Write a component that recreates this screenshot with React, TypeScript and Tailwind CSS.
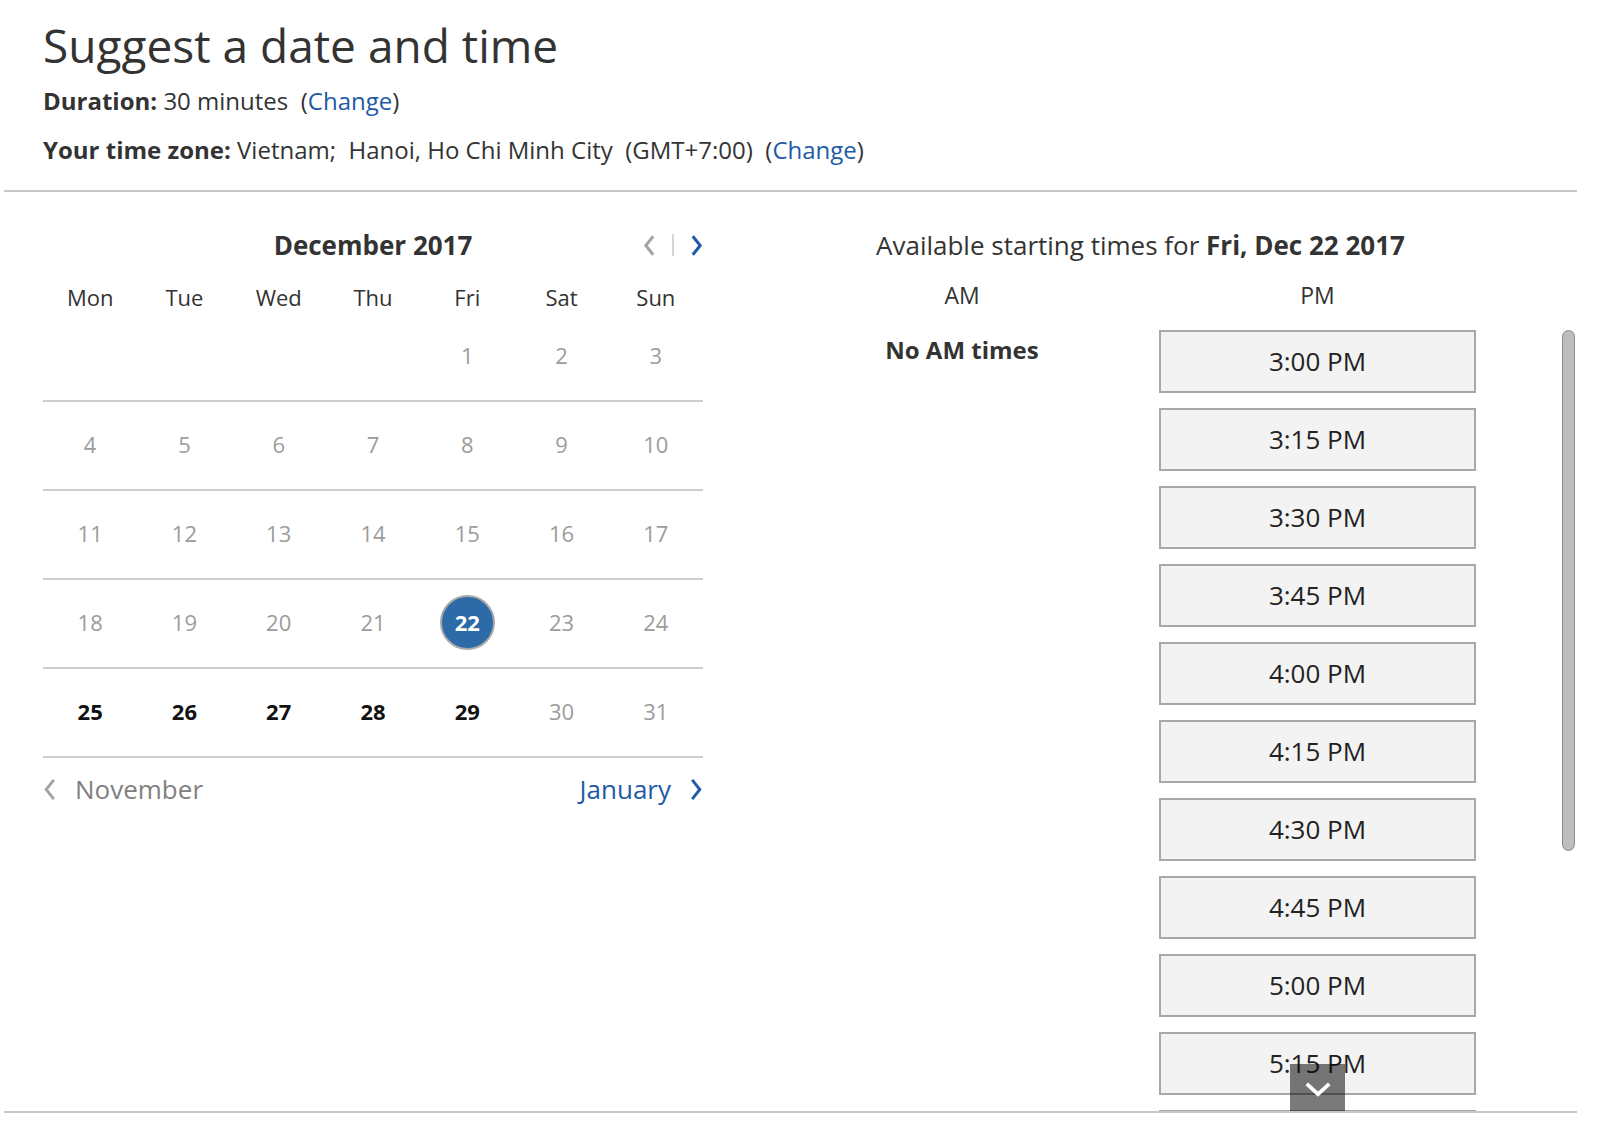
import React from "react";

const weekdays = ["Mon", "Tue", "Wed", "Thu", "Fri", "Sat", "Sun"];

type Day = { n: number | null; kind: "past" | "selected" | "open" };

const weeks: Day[][] = [
  [null, null, null, null, 1, 2, 3],
  [4, 5, 6, 7, 8, 9, 10],
  [11, 12, 13, 14, 15, 16, 17],
  [18, 19, 20, 21, 22, 23, 24],
  [25, 26, 27, 28, 29, 30, 31],
].map((row) =>
  row.map((n) => ({
    n,
    kind: n === 22 ? "selected" : n !== null && n >= 25 && n <= 29 ? "open" : "past",
  }))
);

const times = [
  "3:00 PM",
  "3:15 PM",
  "3:30 PM",
  "3:45 PM",
  "4:00 PM",
  "4:15 PM",
  "4:30 PM",
  "4:45 PM",
  "5:00 PM",
  "5:15 PM",
  "5:30 PM",
];

const Chevron = ({
  dir,
  className,
  stroke = 2.8,
}: {
  dir: "left" | "right" | "down";
  className?: string;
  stroke?: number;
}) => {
  const d =
    dir === "left" ? "M11 1 L3 11 L11 21" : dir === "right" ? "M3 1 L11 11 L3 21" : "M2 2 L14 13 L26 2";
  const vb = dir === "down" ? "0 0 28 16" : "0 0 14 22";
  return (
    <svg viewBox={vb} className={className} fill="none" stroke="currentColor" strokeWidth={stroke}>
      <path d={d} />
    </svg>
  );
};

export default function App() {
  return (
    <div className="w-[1600px] h-[1127px] overflow-hidden bg-white text-[#333] font-['Open_Sans',sans-serif]">
      <header className="pl-[43px] pt-[18px]">
        <h1 className="text-[46px] leading-[55px] text-[#333]">Suggest a date and time</h1>
        <p className="mt-[11px] text-[24px] leading-[33px]">
          <b className="font-bold">Duration:</b> 30 minutes&nbsp; (<span className="text-[#1f5aa6]">Change</span>)
        </p>
        <p className="mt-[16px] text-[24px] leading-[33px]">
          <b className="font-bold">Your time zone:</b> Vietnam;&nbsp; Hanoi, Ho Chi Minh City&nbsp; (GMT+7:00)&nbsp; (
          <span className="text-[#1f5aa6]">Change</span>)
        </p>
      </header>

      <main className="mx-[4px] mt-[24px] flex h-[923px] w-[1573px] border-y-2 border-[#c8c8c8]">
        {/* calendar */}
        <section className="ml-[39px] w-[660px] pt-[36px]">
          <div className="grid grid-cols-[1fr_auto_1fr] items-center">
            <div />
            <div className="text-[26px] font-bold leading-[34px]">December 2017</div>
            <div className="flex items-center justify-end gap-[16px]">
              <Chevron dir="left" className="h-[25px] w-[13px] text-[#a3a3a3]" stroke={3.2} />
              <span className="h-[22px] w-[2px] bg-[#d6d6d6]" />
              <Chevron dir="right" className="h-[25px] w-[13px] text-[#1f5aa6]" stroke={3.2} />
            </div>
          </div>

          <div className="mt-[20px] grid grid-cols-7 text-center text-[22px] leading-[31px] text-[#333]">
            {weekdays.map((w) => (
              <div key={w}>{w}</div>
            ))}
          </div>

          {weeks.map((row, i) => (
            <div key={i} className="grid h-[89px] grid-cols-7 border-b-2 border-[#cdcdcd]">
              {row.map((d, j) => (
                <div key={j} className="flex items-center justify-center pb-[3px] text-[22px]">
                  {d.n === null ? null : d.kind === "selected" ? (
                    <span className="flex h-[55px] w-[55px] items-center justify-center rounded-full border-2 border-[#a9a9a9] bg-[#2c6aa8] font-bold text-white">
                      {d.n}
                    </span>
                  ) : d.kind === "open" ? (
                    <span className="font-bold text-[#111]">{d.n}</span>
                  ) : (
                    <span className="text-[#9c9c9c]">{d.n}</span>
                  )}
                </div>
              ))}
            </div>
          ))}

          <div className="mt-[14px] flex items-center justify-between text-[26px] leading-[34px]">
            <div className="flex items-center gap-[18px] text-[#808080]">
              <Chevron dir="left" className="h-[21px] w-[14px] text-[#a3a3a3]" stroke={3} />
              <span>November</span>
            </div>
            <div className="flex items-center gap-[18px] text-[#1f5aa6]">
              <span>January</span>
              <Chevron dir="right" className="h-[21px] w-[14px]" stroke={3} />
            </div>
          </div>
        </section>

        {/* times */}
        <section className="ml-[173px] flex-1 pt-[36px]">
          <h2 className="text-[26px] leading-[34px]">
            Available starting times for <b className="font-bold">Fri, Dec 22 2017</b>
          </h2>
          <div className="mt-[17px] flex text-[23px] leading-[32px]">
            <div className="w-[172px] text-center">AM</div>
            <div className="ml-[111px] w-[317px] text-center">PM</div>
          </div>
          <div className="mt-[19px] flex h-[781px]">
            <div className="w-[172px] pt-[4px] text-center text-[24px] font-bold leading-[32px]">No AM times</div>
            <div className="relative ml-[111px] w-[317px] overflow-hidden">
              <div className="flex flex-col gap-[15px]">
                {times.map((t) => (
                  <div
                    key={t}
                    className="flex h-[63px] shrink-0 items-center justify-center border-2 border-[#a8a8a8] bg-[#f3f3f3] text-[26px] text-[#222]"
                  >
                    {t}
                  </div>
                ))}
              </div>
              <div className="absolute bottom-0 left-[131px] flex h-[47px] w-[55px] items-center justify-center bg-[rgba(0,0,0,0.52)] pt-[4px]">
                <Chevron dir="down" className="h-[15px] w-[28px] text-white" stroke={4} />
              </div>
            </div>
            <div className="ml-[86px] h-[521px] w-[13px] rounded-full border border-[#8a8a8a] bg-[#bdbdbd]" />
          </div>
        </section>
      </main>
    </div>
  );
}
